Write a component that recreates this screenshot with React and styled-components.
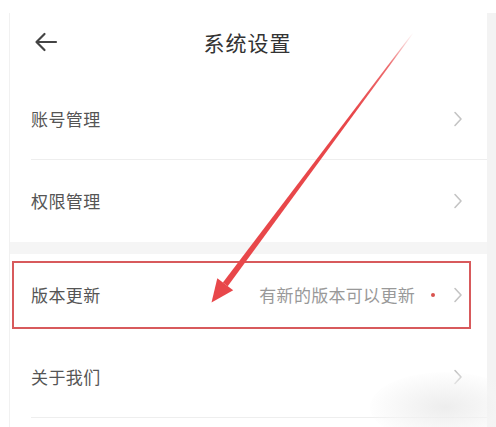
import styled, { createGlobalStyle } from 'styled-components';

const GlobalStyle = createGlobalStyle`
  html, body {
    margin: 0;
    padding: 0;
    background: #ffffff;
    font-family: "Noto Sans CJK SC", "Noto Sans", sans-serif;
  }
`;

const Screen = styled.div`
  position: relative;
  width: 496px;
  height: 427px;
  overflow: hidden;
  display: flex;
  padding-top: 13px;
  box-sizing: border-box;
`;

const Panel = styled.div`
  width: 477px;
  margin-left: 9px;
  border-left: 1px solid #f1f1f1;
  background: #fff;
  display: flex;
  flex-direction: column;
`;

const SideStrip = styled.div`
  flex: 1;
  background: #f3f3f3;
`;

const Header = styled.div`
  position: relative;
  height: 65px;
  padding-bottom: 7px;
  box-sizing: border-box;
  display: flex;
  align-items: center;
  justify-content: center;
  flex-shrink: 0;

  & > svg {
    position: absolute;
    left: 24px;
    top: 19px;
  }
`;

const Title = styled.div`
  font-size: 21px;
  color: #333;
  letter-spacing: 1px;
  padding-right: 2px;
`;

const Group = styled.div`
  display: flex;
  flex-direction: column;
`;

const Gap = styled.div`
  height: 12px;
  background: #f5f5f5;
`;

const Row = styled.div`
  height: 82px;
  margin: 0 0 0 21px;
  padding-right: 24px;
  display: flex;
  align-items: center;
  border-bottom: ${(p) => (p.$divider ? '1px solid #eeeeee' : '1px solid transparent')};
  box-sizing: border-box;
`;

const Label = styled.span`
  font-size: 17px;
  color: #555;
  letter-spacing: 0.4px;
  flex: 1;
`;

const Hint = styled.span`
  font-size: 17px;
  color: #999;
  letter-spacing: 0.3px;
`;

const Dot = styled.span`
  width: 4px;
  height: 4px;
  border-radius: 50%;
  background: #d9534f;
  margin: 0 18px 0 16px;
`;

const Highlight = styled.div`
  position: absolute;
  left: 12px;
  top: 261px;
  width: 459px;
  height: 68px;
  border: 2px solid #d85a5c;
  box-sizing: border-box;
  pointer-events: none;
`;

const Smudge = styled.div`
  position: absolute;
  left: 370px;
  top: 372px;
  width: 150px;
  height: 70px;
  border-radius: 50%;
  background: radial-gradient(ellipse at center, rgba(235, 235, 235, 0.9) 0%, rgba(245, 245, 245, 0.6) 50%, rgba(255, 255, 255, 0) 75%);
  pointer-events: none;
`;

const Overlay = styled.svg`
  position: absolute;
  left: 0;
  top: 0;
  pointer-events: none;
`;

function Chevron() {
  return (
    <svg width="10" height="16" viewBox="0 0 10 16">
      <path d="M2 1.5 L8 8 L2 14.5" fill="none" stroke="#c4c4c4" strokeWidth="1.6" strokeLinecap="round" strokeLinejoin="round" />
    </svg>
  );
}

function BackArrow() {
  return (
    <svg width="24" height="20" viewBox="0 0 24 20">
      <path d="M22 10 H3 M10.5 2 L2.5 10 L10.5 18" fill="none" stroke="#444" strokeWidth="2.2" strokeLinecap="round" strokeLinejoin="round" />
    </svg>
  );
}

const items = [
  [{ label: '账号管理', divider: true }, { label: '权限管理' }],
  [{ label: '版本更新', hint: '有新的版本可以更新', dot: true }, { label: '关于我们', divider: true }],
];

export default function App() {
  return (
    <>
      <GlobalStyle />
      <Screen>
        <Panel>
          <Header>
            <BackArrow />
            <Title>系统设置</Title>
          </Header>
          {items.map((group, gi) => (
            <Group key={gi}>
              {gi > 0 && <Gap />}
              {group.map((it) => (
                <Row key={it.label} $divider={it.divider}>
                  <Label>{it.label}</Label>
                  {it.hint && <Hint>{it.hint}</Hint>}
                  {it.dot && <Dot />}
                  <Chevron />
                </Row>
              ))}
            </Group>
          ))}
        </Panel>
        <SideStrip />
        <Highlight />
        <Smudge />
        <Overlay width="496" height="427" viewBox="0 0 496 427">
          <defs>
            <linearGradient id="fade" x1="413" y1="33" x2="212" y2="302" gradientUnits="userSpaceOnUse">
              <stop offset="0" stopColor="#e8474a" stopOpacity="0" />
              <stop offset="0.12" stopColor="#e8474a" stopOpacity="0.8" />
              <stop offset="0.3" stopColor="#e8474a" stopOpacity="1" />
            </linearGradient>
          </defs>
          <polygon
            points="413.4,33.3 412.6,32.7 222.9,282.6 227.7,286.2"
            fill="url(#fade)"
          />
          <polygon points="211.5,302.5 217.3,278.2 233.2,290.2" fill="#e8474a" />
        </Overlay>
      </Screen>
    </>
  );
}
